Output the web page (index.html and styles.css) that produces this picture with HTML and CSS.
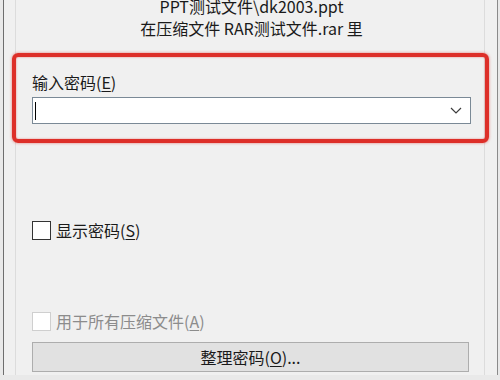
FILE: index.html
```html
<!DOCTYPE html>
<html lang="zh-CN">
<head>
    <meta charset="UTF-8">
    <title>输入密码</title>
    <link rel="stylesheet" href="styles.css">
</head>
<body>
    <div class="window">
        <div class="pane">
            <div class="header">
                <div>PPT测试文件\dk2003.ppt</div>
                <div>在压缩文件 RAR测试文件.rar 里</div>
            </div>

            <div class="field-label">输入密码(<u>E</u>)</div>
            <div class="combo">
                <span class="caret"></span>
                <svg class="chevron" width="12" height="7" viewBox="0 0 12 7">
                    <polyline points="1,1 6,6 11,1" fill="none" stroke="#3c3c3c" stroke-width="1.2"/>
                </svg>
            </div>

            <label class="check-row show-pass">
                <span class="box"></span>
                <span>显示密码(<u>S</u>)</span>
            </label>

            <label class="check-row disabled">
                <span class="box"></span>
                <span>用于所有压缩文件(<u>A</u>)</span>
            </label>

            <div class="button">整理密码(<u>O</u>)...</div>
        </div>
    </div>

    <!-- 标注框 -->
    <div class="highlight"></div>
</body>
</html>
```

FILE: styles.css
```css
body {
    margin: 0;
    width: 500px;
    height: 380px;
    overflow: hidden;
    background-color: #e9e9e9;
    font-family: "Noto Sans CJK SC", "Noto Sans", sans-serif;
    font-size: 16px;
    color: #1a1a1a;
}

.window {
    box-sizing: border-box;
    width: 495px;
    height: 380px;
    margin-left: 3px;
    background-color: #f0f0f0;
    border-left: 1px solid #6e6e6e;
    border-right: 1px solid #8a8a8a;
}

.pane {
    box-sizing: border-box;
    height: 100%;
    margin-left: 11px;
    margin-right: 12px;
    padding: 0 13px 0 16px;
    border-left: 1px solid #dcdcdc;
    border-right: 1px solid #dcdcdc;
}

.header {
    margin-top: -5px;
    text-align: center;
    line-height: 22px;
}

.field-label {
    margin-top: 32px;
    line-height: 22px;
}

u {
    text-underline-offset: 2px;
}

.combo {
    box-sizing: border-box;
    height: 27px;
    margin-top: 4px;
    background-color: #ffffff;
    border: 1px solid #7a8996;
    display: flex;
    align-items: center;
    justify-content: space-between;
    padding: 0 8px 0 2px;
}

.caret {
    width: 1px;
    height: 18px;
    background-color: #000;
}

.check-row {
    display: flex;
    align-items: center;
    gap: 5px;
    height: 20px;
    line-height: 20px;
}

.show-pass {
    margin-top: 96px;
}

.disabled {
    margin-top: 71px;
    color: #8c8c8c;
}

.box {
    box-sizing: border-box;
    width: 19px;
    height: 19px;
    background-color: #ffffff;
    border: 1px solid #333333;
}

.disabled .box {
    border-color: #cfcfcf;
}

.button {
    box-sizing: border-box;
    height: 30px;
    margin-top: 11px;
    margin-right: 2px;
    background-color: #e1e1e1;
    border: 1px solid #adadad;
    text-align: center;
    line-height: 28px;
}

.highlight {
    position: absolute;
    left: 12px;
    top: 53px;
    box-sizing: border-box;
    width: 477px;
    height: 90px;
    border: 4px solid #dd2f29;
    border-radius: 6px;
    box-shadow: 0 0 3px rgba(221, 47, 41, 0.6), inset 0 0 2px rgba(221, 47, 41, 0.6);
}
```
